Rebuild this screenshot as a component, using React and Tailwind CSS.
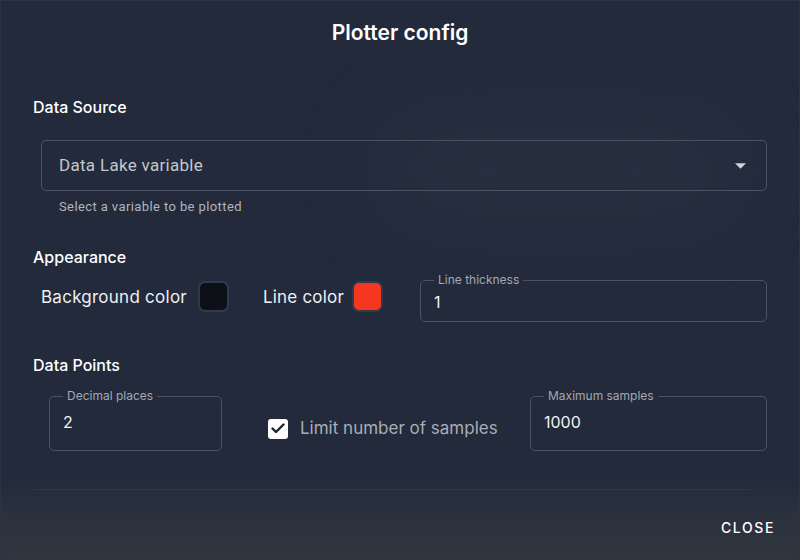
import React from "react";

const roboto = { fontFamily: "Roboto, 'Liberation Sans', sans-serif" };

function OutlinedField({ label, value, className, pt, pb }) {
  return (
    <fieldset className={`rounded-[5px] border border-[#4b5262] pl-[13px] pr-3 ${className}`}>
      <legend className="ml-0 px-[4px] text-[12px] leading-4 text-[#a3a8b2]">{label}</legend>
      <div className={`${pt} ${pb} text-[16px] leading-6 text-[#f1f2f4]`}>{value}</div>
    </fieldset>
  );
}

function Swatch({ color }) {
  return <div className={`h-[31px] w-[31px] rounded-[7px] border-2 border-[#303a4d] ${color}`} />;
}

export default function App() {
  return (
    <div
      className="relative flex h-[560px] w-[800px] flex-col overflow-hidden border border-[#2b3344] bg-[linear-gradient(to_bottom,#222a3b_0%,#222a3b_85%,#2b313d_92%,#30363f_100%)] px-[32px] text-white"
      style={{ fontFamily: "Inter, 'Noto Sans', sans-serif" }}
    >
      <div className="pointer-events-none absolute left-[380px] top-[120px] h-[100px] w-[360px] rounded-full bg-[#2c3343] opacity-60 blur-[40px]" />
      <h1 className="relative mt-[18px] text-center text-[21px] font-semibold leading-7">Plotter config</h1>

      <h2 className="relative mt-[48px] text-[16px] font-medium leading-6">Data Source</h2>
      <div className="relative ml-2 mt-[21px] flex h-[51px] items-center justify-between rounded-[5px] border border-[#4b5262] pl-[17px] pr-[20px]">
        <span className="text-[17px] tracking-[0.3px] text-[#c4c7cd]" style={roboto}>Data Lake variable</span>
        <svg width="11" height="6" viewBox="0 0 10 5">
          <path d="M0 0 L10 0 L5 5 Z" fill="#d0d3d8" />
        </svg>
      </div>
      <p className="relative ml-[26px] mt-[8px] text-[13px] leading-4 tracking-[0.4px] text-[#b1b5bd]" style={roboto}>
        Select a variable to be plotted
      </p>

      <h2 className="relative mt-[30px] text-[16px] font-medium leading-6">Appearance</h2>
      <div className="relative mt-[3px] flex items-start">
        <div className="ml-2 mt-[9px] flex items-center gap-[11px]">
          <span className="mt-[3px] text-[17px] tracking-[0.25px] text-[#eef0f2]">Background color</span>
          <Swatch color="bg-[#0d1016]" />
        </div>
        <div className="ml-[34px] mt-[9px] flex items-center gap-[8px]">
          <span className="mt-[3px] text-[17px] tracking-[0.2px] text-[#eef0f2]">Line color</span>
          <Swatch color="bg-[#f4371f]" />
        </div>
        <OutlinedField label="Line thickness" value="1" className="ml-auto w-[347px]" pt="pt-[2px]" pb="pb-[7px]" />
      </div>

      <h2 className="relative mt-[31px] text-[16px] font-medium leading-6">Data Points</h2>
      <div className="relative mt-[11px] flex items-start">
        <OutlinedField label="Decimal places" value="2" className="ml-[16px] w-[173px]" pt="pt-[6px]" pb="pb-[16px]" />
        <div className="ml-[46px] mt-[28px] flex items-center gap-[12px]">
          <div className="flex h-[20px] w-[20px] items-center justify-center rounded-[3px] bg-white">
            <svg width="14" height="11" viewBox="0 0 14 11">
              <path d="M1.5 5.5 L5 9 L12.5 1.5" fill="none" stroke="#1c2333" strokeWidth="2.4" strokeLinecap="round" strokeLinejoin="round" />
            </svg>
          </div>
          <span className="text-[17px] text-[#a9adb5]">Limit number of samples</span>
        </div>
        <OutlinedField label="Maximum samples" value="1000" className="ml-auto w-[237px]" pt="pt-[6px]" pb="pb-[16px]" />
      </div>

      <div className="relative ml-[1px] mr-[17px] mt-[38px] h-px bg-[#303848]" />
      <div className="relative mt-[27px] flex justify-end">
        <button className="mr-[-8px] text-[14px] font-medium uppercase tracking-[1.6px] text-white">Close</button>
      </div>
    </div>
  );
}
